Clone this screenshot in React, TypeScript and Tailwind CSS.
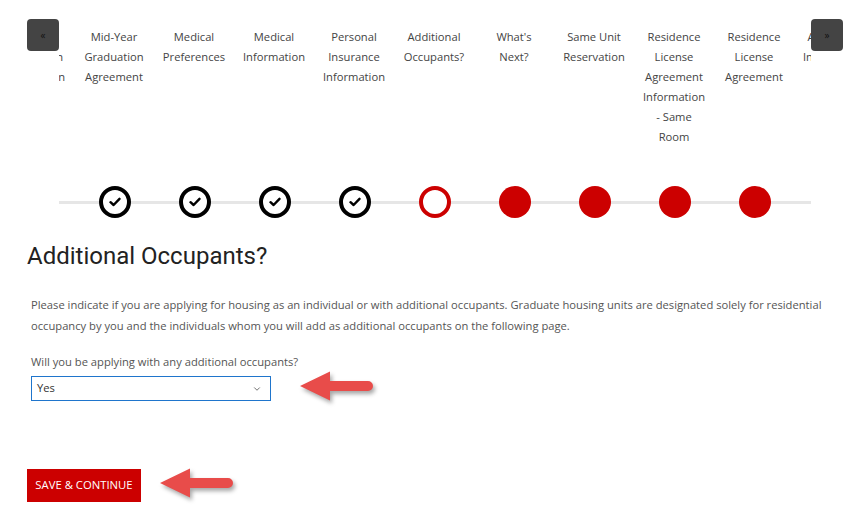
import { ChevronDown } from 'lucide-react'

type Step = {
  lines: string[]
  state: 'done' | 'current' | 'todo'
}

const steps: Step[] = [
  { lines: ['Graduate', 'Application', 'Information'], state: 'done' },
  { lines: ['Mid-Year', 'Graduation', 'Agreement'], state: 'done' },
  { lines: ['Medical', 'Preferences'], state: 'done' },
  { lines: ['Medical', 'Information'], state: 'done' },
  { lines: ['Personal', 'Insurance', 'Information'], state: 'done' },
  { lines: ['Additional', 'Occupants?'], state: 'current' },
  { lines: ["What's", 'Next?'], state: 'todo' },
  { lines: ['Same Unit', 'Reservation'], state: 'todo' },
  {
    lines: ['Residence', 'License', 'Agreement', 'Information', '- Same', 'Room'],
    state: 'todo',
  },
  { lines: ['Residence', 'License', 'Agreement'], state: 'todo' },
  { lines: ['Additional', 'Information'], state: 'todo' },
]

function StepDot({ state }: { state: Step['state'] }) {
  if (state === 'done') {
    return (
      <div className="flex h-[32px] w-[32px] items-center justify-center rounded-full border-[4px] border-black bg-white">
        <svg width="12" height="10" viewBox="0 0 12 10" fill="none">
          <path
            d="M1.5 5.2 L4.6 8 L10.5 1.8"
            stroke="#000"
            strokeWidth="2.4"
            strokeLinecap="round"
            strokeLinejoin="round"
          />
        </svg>
      </div>
    )
  }

  if (state === 'current') {
    return <div className="h-[32px] w-[32px] rounded-full border-[4px] border-[#cc0000] bg-white" />
  }

  return <div className="h-[32px] w-[32px] rounded-full bg-[#cc0000]" />
}

function Arrow() {
  return (
    <svg
      width="80"
      height="36"
      viewBox="0 0 80 36"
      className="-my-[6px] shrink-0 drop-shadow-[2px_3px_2px_rgba(0,0,0,0.35)]"
    >
      <path
        d="M0 15 L30 0.5 L30 10 L68 10 A5 5 0 0 1 68 20 L30 20 L30 29.5 Z"
        fill="#e84c4a"
      />
    </svg>
  )
}

export default function App() {
  return (
    <div className="min-h-[521px] w-[861px] bg-white font-['Open_Sans',sans-serif] text-[11.2px] text-[#444]">
      <div className="relative">
        <div className="relative ml-[59px] mr-[50px] overflow-hidden">
          <div className="absolute left-0 right-0 top-[201px] h-[3px] bg-[#e6e6e6]" />
          <div className="relative -ml-[65px] flex pt-[27px]">
            {steps.map((step, index) => (
              <div key={index} className="flex w-[80px] shrink-0 flex-col items-center">
                <div className="h-[159px] text-center leading-[20px] text-[#444]">
                  {step.lines.map((line) => (
                    <div key={line} className="whitespace-nowrap">
                      {line}
                    </div>
                  ))}
                </div>
                <div className="ml-[2px]">
                  <StepDot state={step.state} />
                </div>
              </div>
            ))}
          </div>
        </div>

        <button
          type="button"
          className="absolute left-[27px] top-[19px] flex h-[32px] w-[32px] items-center justify-center rounded-[4px] bg-[#444] text-[10px] leading-none text-[#111]"
        >
          «
        </button>
        <button
          type="button"
          className="absolute left-[811px] top-[19px] flex h-[32px] w-[32px] items-center justify-center rounded-[4px] bg-[#444] text-[10px] leading-none text-[#111]"
        >
          »
        </button>
      </div>

      <div className="px-[27px] pb-[19px]">
        <h2 className="mt-[24px] font-['Roboto',sans-serif] text-[24px] leading-[28px] text-[#222]">
          Additional Occupants?
        </h2>

        <div className="pl-[4px] pr-[2px]">
          <p className="mt-[24px] leading-[21px] text-[#555]">
            Please indicate if you are applying for housing as an individual or with additional
            occupants. Graduate housing units are designated solely for residential occupancy by
            you and the individuals whom you will add as additional occupants on the following
            page.
          </p>

          <label className="mt-[15px] block leading-[21px] text-[#555]">
            Will you be applying with any additional occupants?
          </label>

          <div className="mt-[4px] flex items-center gap-[29px]">
            <div className="flex h-[25px] w-[240px] items-center justify-between border border-[#1f75cc] bg-white pl-[5px] pr-[8px] text-[#333]">
              <span>Yes</span>
              <ChevronDown size={10} strokeWidth={2} className="text-[#555]" />
            </div>
            <Arrow />
          </div>
        </div>

        <div className="mt-[68px] flex items-center gap-[19px]">
          <button
            type="button"
            className="flex h-[33px] w-[114px] items-center justify-center bg-[#cc0000] text-[11.3px] text-white"
          >
            SAVE &amp; CONTINUE
          </button>
          <Arrow />
        </div>
      </div>
    </div>
  )
}
